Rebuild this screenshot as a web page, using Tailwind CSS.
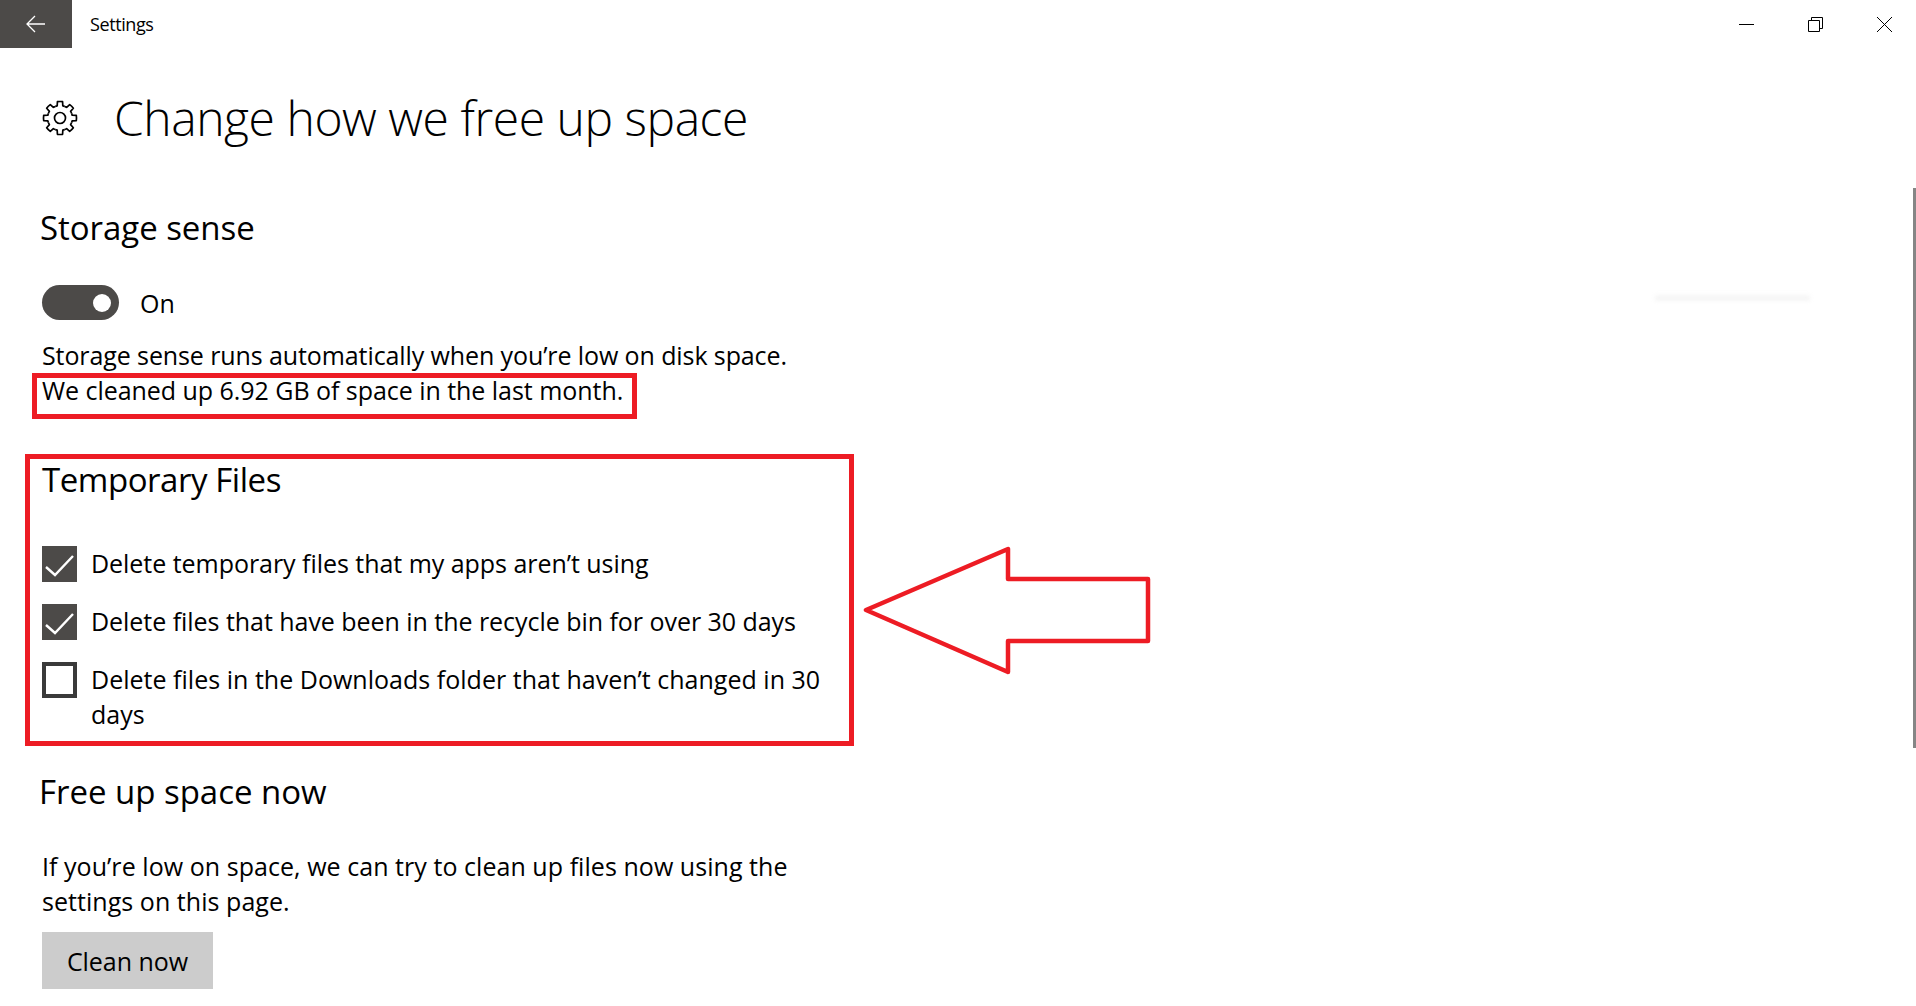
<!doctype html>
<html lang="en">
<head>
<meta charset="utf-8">
<title>Settings</title>
<script src="https://cdn.jsdelivr.net/npm/@tailwindcss/browser@4"></script>
</head>
<body class="relative h-[1006px] w-[1916px] overflow-hidden bg-white text-black font-['Open_Sans','Noto_Sans',sans-serif]">
  <header class="flex h-12 items-center">
    <button class="flex h-12 w-[72px] items-center justify-center bg-[#4c4a48]" aria-label="Back">
      <svg width="20" height="18" viewBox="0 0 20 18" fill="none" stroke="white" stroke-width="1.3"><path d="M19 9H1.5M9 1 1 9l8 8"/></svg>
    </button>
    <span class="ml-[18px] text-[18px] leading-6 tracking-[-0.4px]">Settings</span>
    <div class="ml-auto flex items-center gap-[54px] pr-6">
      <svg width="15" height="15" viewBox="0 0 15 15" fill="none" stroke="black" stroke-width="1"><path d="M0 7.5h15"/></svg>
      <svg width="15" height="15" viewBox="0 0 15 15" fill="none" stroke="black" stroke-width="1"><path d="M.5 3.5h11v11H.5zM3.5 3.5V.5h11v11h-3"/></svg>
      <svg width="15" height="15" viewBox="0 0 15 15" fill="none" stroke="black" stroke-width="1"><path d="M0 0l15 15M15 0 0 15"/></svg>
    </div>
  </header>
  <main class="pl-[42px]">
    <div class="mt-[35px] flex h-[70px] items-center">
      <svg width="36" height="36" viewBox="0 0 36 36" fill="none" stroke="black" stroke-width="1.7" stroke-linejoin="round">
        <g id="gear">
          <path d="M13.22 6.45A12.5 12.5 0 0 1 15.19 5.82L15.42 1.7A16.5 16.5 0 0 1 20.58 1.7L20.81 5.82A12.5 12.5 0 0 1 22.78 6.45"/>
          <path transform="rotate(45 18 18)" d="M13.22 6.45A12.5 12.5 0 0 1 15.19 5.82L15.42 1.7A16.5 16.5 0 0 1 20.58 1.7L20.81 5.82A12.5 12.5 0 0 1 22.78 6.45"/>
          <path transform="rotate(90 18 18)" d="M13.22 6.45A12.5 12.5 0 0 1 15.19 5.82L15.42 1.7A16.5 16.5 0 0 1 20.58 1.7L20.81 5.82A12.5 12.5 0 0 1 22.78 6.45"/>
          <path transform="rotate(135 18 18)" d="M13.22 6.45A12.5 12.5 0 0 1 15.19 5.82L15.42 1.7A16.5 16.5 0 0 1 20.58 1.7L20.81 5.82A12.5 12.5 0 0 1 22.78 6.45"/>
          <path transform="rotate(180 18 18)" d="M13.22 6.45A12.5 12.5 0 0 1 15.19 5.82L15.42 1.7A16.5 16.5 0 0 1 20.58 1.7L20.81 5.82A12.5 12.5 0 0 1 22.78 6.45"/>
          <path transform="rotate(225 18 18)" d="M13.22 6.45A12.5 12.5 0 0 1 15.19 5.82L15.42 1.7A16.5 16.5 0 0 1 20.58 1.7L20.81 5.82A12.5 12.5 0 0 1 22.78 6.45"/>
          <path transform="rotate(270 18 18)" d="M13.22 6.45A12.5 12.5 0 0 1 15.19 5.82L15.42 1.7A16.5 16.5 0 0 1 20.58 1.7L20.81 5.82A12.5 12.5 0 0 1 22.78 6.45"/>
          <path transform="rotate(315 18 18)" d="M13.22 6.45A12.5 12.5 0 0 1 15.19 5.82L15.42 1.7A16.5 16.5 0 0 1 20.58 1.7L20.81 5.82A12.5 12.5 0 0 1 22.78 6.45"/>
        </g>
        <circle cx="18" cy="18" r="5.5"/>
      </svg>
      <h1 class="ml-9 whitespace-nowrap text-[48px] leading-[70px] font-light tracking-[-0.45px]">Change how we free up space</h1>
    </div>

    <h2 class="mt-[52px] -ml-0.5 text-[33px] leading-[46px] tracking-[-0.05px]">Storage sense</h2>
    <div class="mt-[34px] flex h-[35px] items-center">
      <span class="relative block h-[35px] w-[77px] rounded-full bg-[#4c4a48]">
        <span class="absolute top-[9px] left-[51px] h-[18px] w-[18px] rounded-full bg-white"></span>
      </span>
      <span class="ml-[21px] pt-px text-[25px] leading-[35px] tracking-[-0.04px]">On</span>
    </div>
    <p class="mt-[18px] whitespace-nowrap text-[25px] leading-[35px] tracking-[-0.04px]"><span class="tracking-[-0.1px]">Storage sense runs automatically when you’re low on disk space.</span><br>We cleaned up 6.92 GB of space in the last month.</p>

    <h2 class="mt-[49px] text-[33px] leading-[46px] tracking-[-0.45px]">Temporary Files</h2>
    <ul class="mt-[43px] flex flex-col gap-[22px] text-[25px] leading-[35px] tracking-[-0.04px]">
      <li class="flex gap-[14px]">
        <span class="flex h-[36px] w-[35px] shrink-0 items-center justify-center bg-[#4c4a48]">
          <svg width="35" height="36" viewBox="0 0 35 36" fill="none" stroke="white" stroke-width="2.4"><path d="m4 21 9 8L31 10"/></svg>
        </span>
        <span class="whitespace-nowrap">Delete temporary files that my apps aren’t using</span>
      </li>
      <li class="flex gap-[14px]">
        <span class="flex h-[36px] w-[35px] shrink-0 items-center justify-center bg-[#4c4a48]">
          <svg width="35" height="36" viewBox="0 0 35 36" fill="none" stroke="white" stroke-width="2.4"><path d="m4 21 9 8L31 10"/></svg>
        </span>
        <span class="whitespace-nowrap">Delete files that have been in the recycle bin for over 30 days</span>
      </li>
      <li class="flex gap-[14px]">
        <span class="h-[36px] w-[35px] shrink-0 border-4 border-[#3a3a3a] bg-white"></span>
        <span class="whitespace-nowrap tracking-[0.02px]">Delete files in the Downloads folder that haven’t changed in 30<br>days</span>
      </li>
    </ul>

    <h2 class="mt-[37px] -ml-[3px] text-[33px] leading-[46px] tracking-[-0.02px]">Free up space now</h2>
    <p class="mt-[34px] whitespace-nowrap text-[25px] leading-[35px] tracking-[0.05px]">If you’re low on space, we can try to clean up files now using the<br>settings on this page.</p>
    <button class="mt-[13px] flex h-[57px] w-[171px] items-center justify-center bg-[#cccccc] pt-0.5 text-[25px] tracking-[-0.04px]">Clean now</button>
  </main>

  <!-- overlays -->
  <div class="absolute top-[188px] right-0 h-[560px] w-[3px] bg-[#858585]"></div>
  <div class="absolute top-[294px] left-[1655px] h-[6px] w-[155px] bg-gradient-to-b from-transparent to-[#ececec] blur-[2px]"></div>
  <div class="absolute top-[373px] left-[32px] h-[46px] w-[605px] border-[5px] border-[#ed1c24]"></div>
  <div class="absolute top-[454px] left-[25px] h-[292px] w-[829px] border-[5px] border-[#ed1c24]"></div>
  <svg class="absolute top-[540px] left-[860px]" width="294" height="140" viewBox="860 540 294 140" fill="none" stroke="#ed1c24" stroke-width="4.5" stroke-linejoin="round">
    <path d="M866 610 1008 549V579H1148V641H1008V672Z"/>
  </svg>
</body>
</html>
